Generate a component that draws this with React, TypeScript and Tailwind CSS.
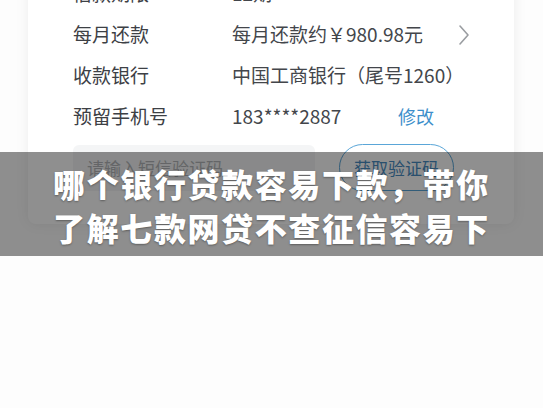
import React from "react";

const font = {
  fontFamily: '"Noto Sans CJK SC", "Noto Sans", sans-serif',
};

function Row({ label, children }: { label: string; children: React.ReactNode }) {
  return (
    <div className="flex h-[41px] items-center">
      <div className="w-[159px] shrink-0 text-[19px] text-[#3d4045]">{label}</div>
      <div className="flex flex-1 items-center text-[19px] text-[#43464b]">{children}</div>
    </div>
  );
}

export default function App() {
  return (
    <div className="relative h-[408px] w-[543px] overflow-hidden bg-[#fdfdfd]" style={font}>
      <div className="ml-[28px] mt-[-27px] w-[486px] rounded-lg bg-white pb-[33px] pl-[45px] pr-[44px] shadow-[0_0_14px_rgba(0,0,0,0.07)]">
        <Row label="借款期限">12期</Row>
        <Row label="每月还款">
          <span>每月还款约￥980.98元</span>
          <svg className="ml-auto mr-[0px]" width="12" height="22" viewBox="0 0 12 22" fill="none">
            <path d="M2 2 L10 11 L2 20" stroke="#9a9da1" strokeWidth="1.6" strokeLinecap="round" strokeLinejoin="round" />
          </svg>
        </Row>
        <Row label="收款银行">
          <span>中国工商银行（尾号1260）</span>
        </Row>
        <Row label="预留手机号">
          <span className="w-[166px]">183****2887</span>
          <span className="text-[18px] text-[#3d8fcb]">修改</span>
        </Row>
        <div className="mt-[7px] flex items-center">
          <div className="flex h-[46px] w-[242px] items-center rounded-md bg-[#f4f5f6] pl-[14px] text-[17px] text-[#b3b5b8]">
            请输入短信验证码
          </div>
          <div className="ml-[24px] flex h-[47px] w-[115px] items-center justify-center rounded-full border-[1.5px] border-[#5aa6d8] text-[17px] text-[#4a8dc3]">
            获取验证码
          </div>
        </div>
      </div>

      <div className="absolute left-0 top-[152px] h-[104px] w-full bg-[rgba(0,0,0,0.44)] pt-[9px] text-center">
        <div className="text-[32px] font-black leading-[44px] tracking-[1.6px] text-white [text-shadow:0_1px_2px_rgba(0,0,0,0.35)]">
          哪个银行贷款容易下款，带你
        </div>
        <div className="text-[32px] font-black leading-[44px] tracking-[1.6px] text-white [text-shadow:0_1px_2px_rgba(0,0,0,0.35)]">
          了解七款网贷不查征信容易下
        </div>
      </div>
    </div>
  );
}
